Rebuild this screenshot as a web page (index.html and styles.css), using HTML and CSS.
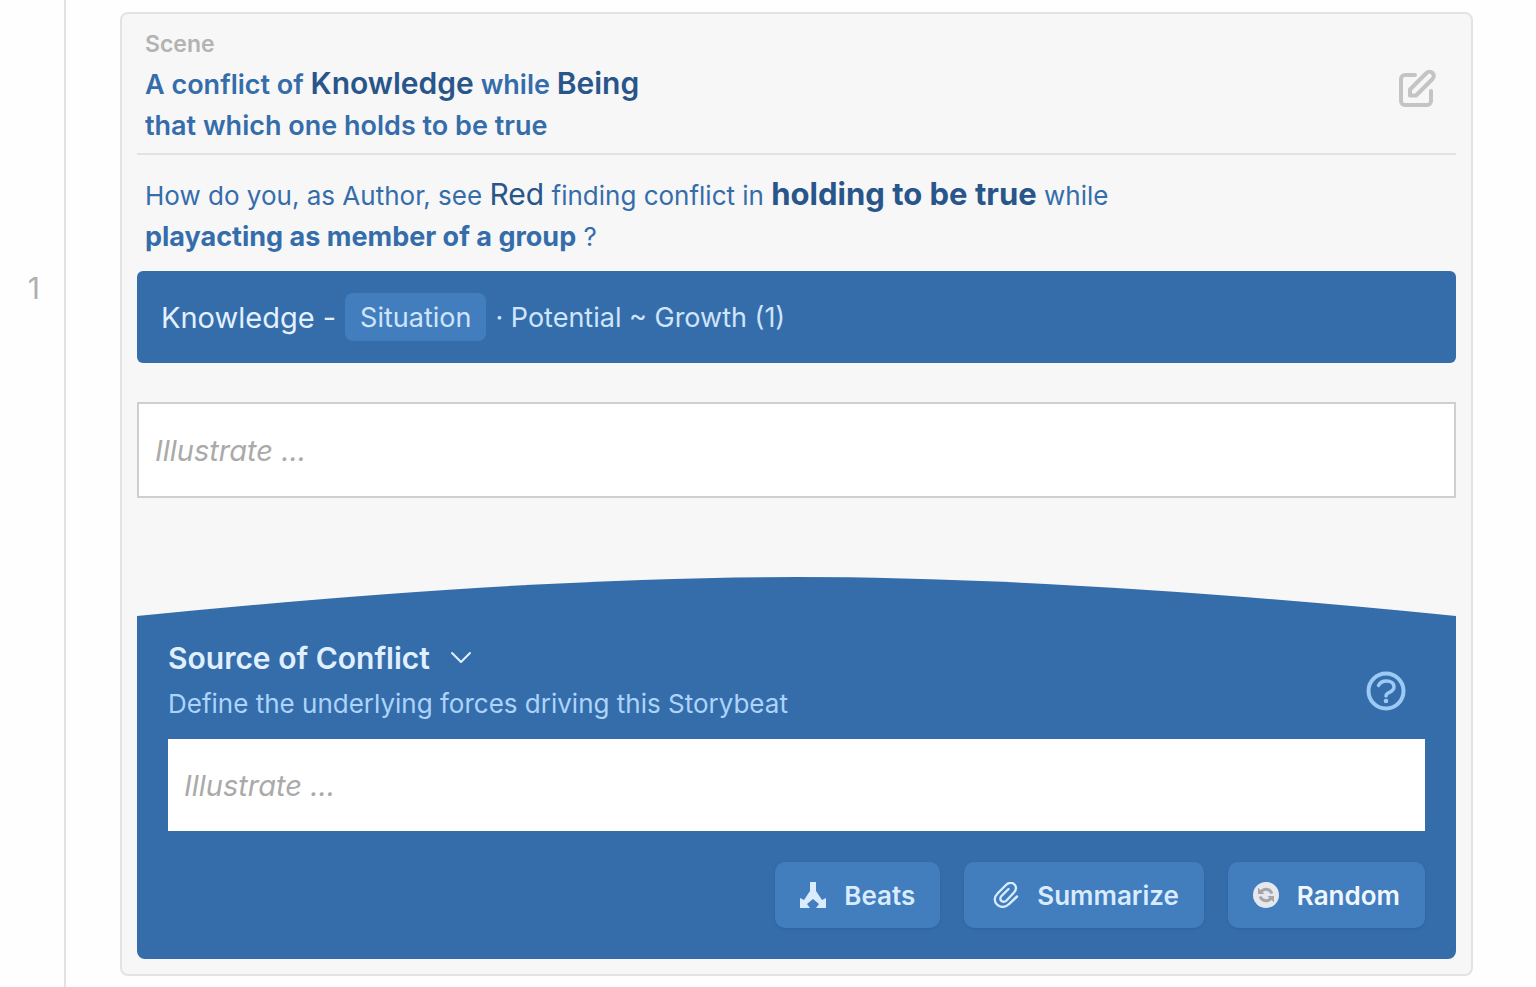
FILE: index.html
```
<!DOCTYPE html>
<html lang="en">
<head>
    <meta charset="UTF-8">
    <meta name="viewport" content="width=device-width, initial-scale=1.0">
    <title>Scene</title>
    <link rel="stylesheet" href="styles.css">
</head>
<body>

    <div class="page">
        <aside class="rail">1</aside>

        <main class="scene">
            <header class="scene-header">
                <div>
                    <p class="label">Scene</p>
                    <h1>A conflict of <span class="term">Knowledge</span> while <span class="term">Being</span><br>that which one holds to be true</h1>
                </div>
                <button class="icon-button edit" aria-label="Edit scene">
                    <svg width="40" height="40" viewBox="0 0 40 40" fill="none" stroke="currentColor" stroke-width="4" stroke-linejoin="round" stroke-linecap="round">
                        <path d="M17 7H7a4 4 0 0 0-4 4v22a4 4 0 0 0 4 4h22a4 4 0 0 0 4-4V23"/>
                        <path d="M12 21.500L28.500 5a4 4 0 0 1 6 6L18 27.500h-6z"/>
                    </svg>
                </button>
            </header>

            <p class="question">How do you, as Author, see <span class="term">Red</span> finding conflict in <strong class="term">holding to be true</strong> while<br><strong>playacting as member of a group</strong> ?</p>

            <div class="beat">
                <span class="beat-name">Knowledge -</span>
                <span class="tag">Situation</span>
                <span>· Potential ~ Growth (1)</span>
            </div>

            <input type="text" class="illustrate outlined" placeholder="Illustrate ..." aria-label="Illustrate scene">

            <svg class="arch" viewBox="0 0 1318 40" preserveAspectRatio="none" aria-hidden="true">
                <path d="M0 40V39Q390 0 659 0T1318 39V40z"/>
            </svg>
            <section class="source">
                <div class="source-header">
                    <div>
                        <button class="source-toggle">
                            Source of Conflict
                            <svg width="22" height="14" viewBox="0 0 22 14" fill="none" stroke="currentColor" stroke-width="2" stroke-linecap="round" stroke-linejoin="round"><path d="M2 2l9 9 9-9"/></svg>
                        </button>
                        <p>Define the underlying forces driving this Storybeat</p>
                    </div>
                    <button class="icon-button help" aria-label="Help">
                        <svg width="40" height="40" viewBox="0 0 40 40" fill="none" stroke="currentColor" stroke-width="4" stroke-linecap="round">
                            <circle cx="20" cy="20" r="17.500"/>
                            <path stroke-width="3.500" d="M12.500 14.500c2-4 5-4.500 8-4.500 4 0 7.500 2 7.500 6s-4 5-6 6c-1.500.8-2 1.500-2 3"/>
                            <circle cx="20" cy="30" r="2.300" fill="currentColor" stroke="none"/>
                        </svg>
                    </button>
                </div>

                <input type="text" class="illustrate" placeholder="Illustrate ..." aria-label="Illustrate source of conflict">

                <div class="actions">
                    <button class="action">
                        <svg width="26" height="26" viewBox="0 0 26 26" fill="currentColor"><path d="M10 0h6v9l6 9 4-2v10H16l3-4-6-5-6 5 3 4H0V16l4 2 6-9z"/></svg>
                        Beats
                    </button>
                    <button class="action">
                        <svg width="30" height="26" viewBox="-4 0 30 26" fill="none" stroke="currentColor" stroke-width="2.400" stroke-linecap="round"><path d="M24 14.500l-8 7.500c-4 4-9 3.500-12 .5s-3-7.500 1-11.500l8-8c3-3 6.500-2.500 8.500-.5s2 5.500-.5 8l-7.500 8c-1.500 1.500-3.500 1.500-5 .5s-1.500-3.500 0-5l7-7"/></svg>
                        Summarize
                    </button>
                    <button class="action random">
                        <svg width="26" height="26" viewBox="0 0 26 26">
                            <circle cx="13" cy="13" r="13" fill="#e5e9ef"/>
                            <path d="M8 10c2.500-4 8.500-4 11 1.500M18 16c-2.500 4-8.500 4-11-1.500" fill="none" stroke="#a6a6a6" stroke-width="3"/>
                            <path d="M5 5.500v6.500h6.500zM21 20.500v-6.500h-6.500z" fill="#a6a6a6"/>
                        </svg>
                        Random
                    </button>
                </div>
            </section>
        </main>
    </div>

</body>
</html>
```
FILE: styles.css
```
* {
    box-sizing: border-box;
}

body {
    font-family: Inter, "Liberation Sans", sans-serif;
    font-size: 26px;
    line-height: 41px;
    color: #356dab;
    background-color: #fefefe;
    margin: 0;
}

h1, p {
    margin: 0;
}

button {
    font: inherit;
    color: inherit;
    border: none;
    background: none;
    padding: 0;
    cursor: pointer;
}

svg {
    display: block;
    flex-shrink: 0;
}

.page {
    display: flex;
    min-height: 100vh;
}

.rail {
    width: 66px;
    border-right: 2px solid #e2e2e2;
    padding: 268px 24px 0 0;
    text-align: right;
    font-size: 30px;
    color: #b0b0b0;
}

.scene {
    flex: 1;
    align-self: flex-start;
    margin: 12px 63px 11px 54px;
    padding: 16px 15px 15px;
    background-color: #f7f7f7;
    border: 2px solid #e3e3e3;
    border-radius: 8px;
}

.scene-header {
    display: flex;
    justify-content: space-between;
    align-items: center;
    padding: 0 18px 7px 8px;
    border-bottom: 2px solid #e2e2e2;
}

.label {
    margin-bottom: 6px;
    font-size: 23px;
    line-height: 28px;
    font-weight: 600;
    color: #b3b3b3;
}

h1 {
    font-size: 27px;
    font-weight: 600;
}

.term {
    font-size: 30px;
    line-height: 30px;
    color: #28558a;
}

.edit {
    color: #c4c4c4;
}

.question {
    padding: 20px 8px 14px;
}

.question strong {
    font-size: 27px;
    font-weight: 700;
}

.question strong.term {
    font-size: 31px;
}

.beat {
    display: flex;
    align-items: center;
    gap: 9px;
    padding: 22px 24px;
    font-size: 27px;
    color: #cfe5fb;
    background-color: #356dab;
    border-radius: 6px;
}

.beat-name {
    font-size: 29px;
    color: #e3f1ff;
}

.tag {
    padding: 4px 15px 3px;
    background-color: #427ebd;
    border-radius: 8px;
}

.illustrate {
    display: block;
    width: 100%;
    height: 92px;
    padding: 0 16px;
    border: none;
    border-radius: 0;
    background-color: #fff;
    font: inherit;
    font-size: 29px;
}

.illustrate::placeholder {
    color: #aaa;
    font-style: italic;
    opacity: 1;
}

.outlined {
    height: 96px;
    margin: 39px 0 79px;
    border: 2px solid #cfcfcf;
}

.arch {
    width: 100%;
    height: 40px;
    fill: #356dab;
}

.source {
    padding: 18px 31px 31px;
    background-color: #356dab;
    border-radius: 0 0 8px 8px;
    color: #acd4fb;
}

.source-header {
    display: flex;
    justify-content: space-between;
    align-items: flex-end;
    padding: 0 19px 15px 0;
}

.source-toggle {
    display: flex;
    align-items: center;
    gap: 20px;
    margin-bottom: 2px;
    font-size: 30px;
    line-height: 46px;
    font-weight: 600;
    color: #e0f0ff;
}

.help {
    margin-bottom: 13px;
    color: #9dcaf5;
}

.actions {
    display: flex;
    justify-content: flex-end;
    gap: 24px;
    margin-top: 31px;
}

.action {
    display: flex;
    align-items: center;
    gap: 18px;
    height: 66px;
    padding: 0 25px;
    background-color: #427ebd;
    border-radius: 10px;
    box-shadow: 0 1px 3px rgba(0, 0, 0, 0.1);
    font-weight: 600;
    color: #d8ebff;
}

.random {
    color: #f0f7ff;
}
```
